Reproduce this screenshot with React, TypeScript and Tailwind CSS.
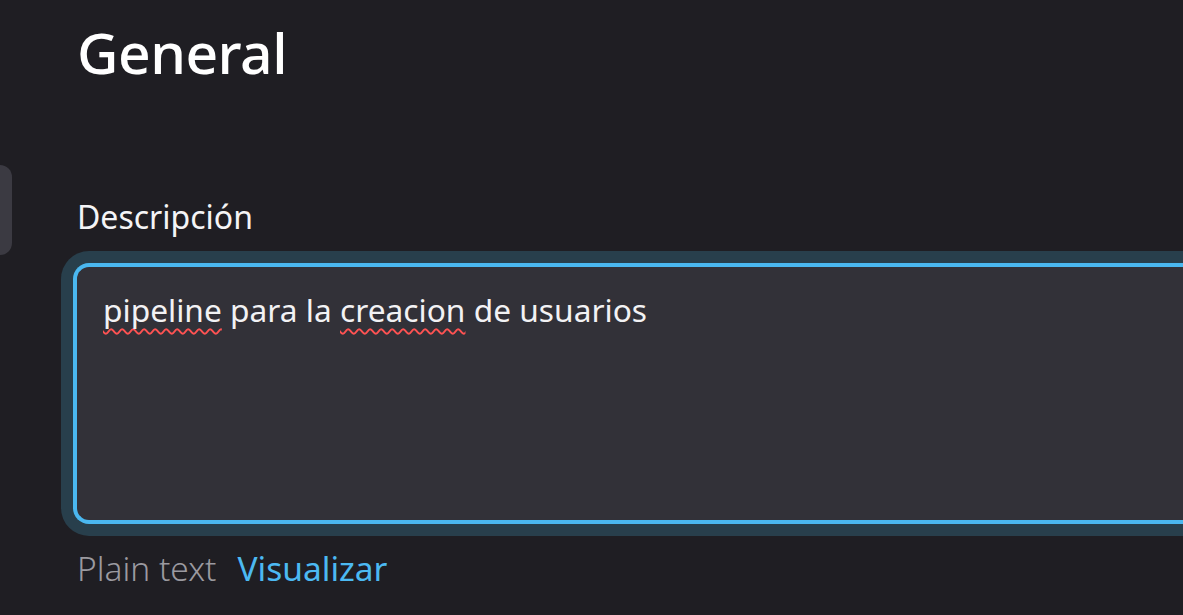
const font = { fontFamily: '"Noto Sans", "Open Sans", sans-serif' };

const Misspelled = ({ children }: { children: string }) => (
  <span className="underline decoration-wavy decoration-[#ff5252] decoration-[1.5px] underline-offset-[6px] [text-decoration-skip-ink:none]">
    {children}
  </span>
);

const App = () => {
  return (
    <div className="flex h-[615px] w-full overflow-hidden bg-[#1f1e23] text-white" style={font}>
      {/* sidebar edge */}
      <div className="w-[12px] shrink-0">
        <div className="mt-[165px] h-[90px] w-[12px] rounded-r-[12px] bg-[#3b3a42]" />
      </div>

      <div className="flex min-w-0 flex-1 flex-col pl-[65px]">
        <h1 className="pt-[20px] text-[57px] font-medium leading-[64px] tracking-[-0.5px]">General</h1>

        <label className="mt-[113px] text-[32px] leading-[40px] text-[#f4f4f6]">Descripción</label>

        <div className="-ml-[16px] mt-[14px] w-[1200px] rounded-l-[28px] bg-[#283f4c] py-[12px] pl-[12px]">
          <div className="h-[261px] rounded-l-[16px] border-4 border-r-0 border-[#4ab8f0] bg-[#323138] px-[26px] pt-[23px]">
            <p className="text-[31.7px] leading-[40px] text-[#f2f2f4]">
              <Misspelled>pipeline</Misspelled> para la <Misspelled>creacion</Misspelled> de usuarios
            </p>
          </div>
        </div>

        <div className="mt-[10px] flex items-baseline gap-[21px] text-[33.5px] leading-[44px]">
          <span className="font-light text-[#9b9aa0]">Plain text</span>
          <span className="text-[#4cb9f2]">Visualizar</span>
        </div>
      </div>
    </div>
  );
};

export default App;
